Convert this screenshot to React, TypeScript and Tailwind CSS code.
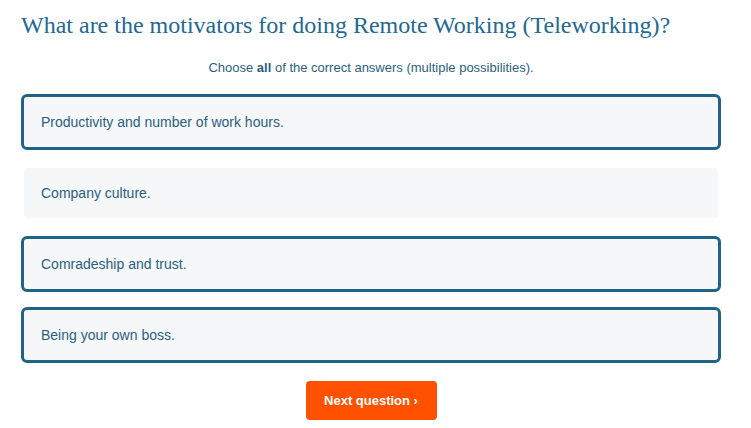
export default function App() {
  const opts = [
    { t: "Productivity and number of work hours.", s: true },
    { t: "Company culture.", s: false },
    { t: "Comradeship and trust.", s: true },
    { t: "Being your own boss.", s: true },
  ];
  return (
    <div className="w-[751px] h-[428px] bg-white pl-[21px] pr-[30px] pt-[8px]" style={{ fontFamily: '"Liberation Sans", Arial, sans-serif' }}>
      <h1 className="text-[24px] leading-[34px] text-[#236892] whitespace-nowrap" style={{ fontFamily: '"Liberation Serif", Georgia, serif' }}>
        What are the motivators for doing Remote Working (Teleworking)?
      </h1>
      <p className="text-center text-[13px] leading-[16px] text-[#2b5f80] mt-[18px]">
        Choose <b>all</b> of the correct answers (multiple possibilities).
      </p>
      <div className="mt-[18px] flex flex-col gap-[15px]">
        {opts.map((o) => (
          <div
            key={o.t}
            className={`h-[56px] flex items-center pl-[17px] rounded-[6px] border-[3px] bg-[#f5f7f9] bg-clip-padding text-[14px] text-[#2b5f80] ${o.s ? "border-[#1f6389]" : "border-transparent"}`}
          >
            {o.t}
          </div>
        ))}
      </div>
      <div className="flex justify-center mt-[18px]">
        <button className="w-[131px] h-[39px] rounded-[4px] bg-[#ff5100] text-white font-bold text-[13px]">
          Next question ›
        </button>
      </div>
    </div>
  );
}
